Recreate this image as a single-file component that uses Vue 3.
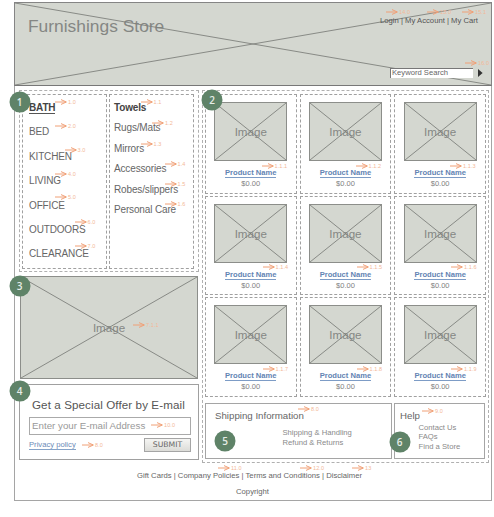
<script setup>
import { h } from 'vue'

const Cross = () =>
  h('svg', { class: 'cross', viewBox: '0 0 100 100', preserveAspectRatio: 'none' }, [
    h('path', { d: 'M0 0L100 100M0 100L100 0', 'vector-effect': 'non-scaling-stroke', fill: 'none', stroke: '#7f817d', 'stroke-width': 0.9 }),
  ])

const categories = ['BATH', 'BED', 'KITCHEN', 'LIVING', 'OFFICE', 'OUTDOORS', 'CLEARANCE']
const subcategories = ['Towels', 'Rugs/Mats', 'Mirrors', 'Accessories', 'Robes/slippers', 'Personal Care']

const badges = [
  { n: 1, x: 19.6, y: 101.8 },
  { n: 2, x: 212.2, y: 100 },
  { n: 3, x: 19.6, y: 285.8 },
  { n: 4, x: 19.6, y: 390.6 },
  { n: 5, x: 225.2, y: 440.6 },
  { n: 6, x: 399.6, y: 441.5 },
]

const notes = [
  ['14.0', 386, 12.3], ['15.0', 427, 12.3], ['15.1', 462, 12.3], ['16.0', 465, 63],
  ['1.0', 55, 101.7], ['2.0', 55, 125.6], ['3.0', 64.5, 149.7], ['4.0', 55, 173.6],
  ['5.0', 55, 197.4], ['6.0', 74.5, 221.6], ['7.0', 74.5, 246],
  ['1.1', 140.5, 101.5], ['1.2', 152, 123], ['1.3', 140.5, 143.5], ['1.4', 164.5, 163.5],
  ['1.5', 164.5, 183.7], ['1.6', 164.5, 203.7],
  ['7.1.1', 133, 325], ['10.0', 151, 425], ['8.0', 82, 445],
  ['1.1.1', 261.5, 166], ['1.1.2', 355.5, 166], ['1.1.3', 450, 166],
  ['1.1.4', 262.5, 266.7], ['1.1.5', 356.5, 266.7], ['1.1.6', 451, 266.7],
  ['1.1.7', 262.5, 369.3], ['1.1.8', 356.5, 369.3], ['1.1.9', 451, 369.3],
  ['8.0', 298, 409.2], ['9.0', 422, 410.5],
  ['11.0', 218, 467.6], ['12.0', 300, 467.8], ['13', 352, 467.8],
]
</script>

<template>
  <div class="page">
    <div class="frame">
      <header class="header">
        <h1>Furnishings Store</h1>
        <Cross />
        <div class="tools">
          <div class="account">Login | My Account | My Cart</div>
          <div class="search">
            <div class="search-box">Keyword Search</div>
            <svg class="go" viewBox="0 0 5 8"><path d="M0 0L4.6 4L0 8Z" fill="#333" /></svg>
          </div>
        </div>
      </header>

      <main class="main">
        <div class="left">
          <nav class="nav">
            <ul class="cats">
              <li v-for="(c, i) in categories" :key="c"><span :class="{ current: i === 0 }">{{ c }}</span></li>
            </ul>
            <ul class="subs">
              <li v-for="(s, i) in subcategories" :key="s" :class="{ bold: i === 0 }">{{ s }}</li>
            </ul>
          </nav>
          <div class="picture promo"><span>Image</span><Cross /></div>
          <section class="offer">
            <h2>Get a Special Offer by E-mail</h2>
            <div class="email">Enter your E-mail Address</div>
            <div class="offer-row">
              <a class="privacy">Privacy policy</a>
              <div class="submit">SUBMIT</div>
            </div>
          </section>
        </div>

        <div class="right">
          <div class="products">
            <article v-for="p in 9" :key="p" class="card">
              <div class="picture"><span>Image</span><Cross /></div>
              <a class="name">Product Name</a>
              <div class="price">$0.00</div>
            </article>
          </div>
          <div class="info">
            <section class="shipping">
              <h3>Shipping Information</h3>
              <p>Shipping &amp; Handling</p>
              <p>Refund &amp; Returns</p>
            </section>
            <section class="help">
              <h3>Help</h3>
              <p>Contact Us</p>
              <p>FAQs</p>
              <p>Find a Store</p>
            </section>
          </div>
        </div>
      </main>

      <footer class="footer">
        <div class="links">Gift Cards | Company Policies | Terms and Conditions | Disclaimer</div>
        <div class="copy">Copyright</div>
      </footer>
    </div>

    <div v-for="(n, i) in notes" :key="i" class="note" :style="{ left: n[1] + 'px', top: n[2] + 'px' }">
      <svg viewBox="0 0 12 6"><path d="M0 3H11M6 .6L11.4 3L6 5.4" fill="none" stroke="#f0a077" stroke-width="1" /></svg>
      <span>{{ n[0] }}</span>
    </div>
    <div v-for="b in badges" :key="b.n" class="badge" :style="{ left: b.x + 'px', top: b.y + 'px' }">{{ b.n }}</div>
  </div>
</template>

<style>
body {
  margin: 0;
  background: #fff;
}
</style>

<style scoped>
* {
  box-sizing: border-box;
  margin: 0;
  padding: 0;
}
.page {
  position: relative;
  width: 494px;
  height: 517px;
  padding: 2px 0 0 14px;
  overflow: hidden;
  font-family: "Liberation Sans", Arial, sans-serif;
  color: #666;
  white-space: nowrap;
}
.frame {
  display: flex;
  flex-direction: column;
  width: 478px;
  height: 499px;
  border: 1px solid #a5a5a5;
}
.header {
  position: relative;
  display: flex;
  justify-content: space-between;
  flex: none;
  height: 84px;
  margin: -1px -1px 0;
  padding-left: 13px;
  background: #d4d7d0;
  border: 1px solid #858585;
  border-bottom-color: #777;
}
h1 {
  padding-top: 12px;
  font-size: 17.4px;
  line-height: 22px;
  font-weight: 400;
  color: #858784;
}
.cross {
  position: absolute;
  inset: 0;
  width: 100%;
  height: 100%;
}
.tools {
  position: relative;
  width: 103px;
  margin-right: 8px;
}
.account {
  padding: 13px 0 0 0;
  font-size: 7.7px;
  line-height: 10px;
  color: #555;
}
.search {
  display: flex;
  align-items: center;
  margin: 42px 0 0 10px;
}
.search-box {
  flex: none;
  width: 83px;
  height: 10px;
  padding-left: 1px;
  background: #fff;
  border-top: 1px solid #777;
  border-left: 1px solid #777;
  font-size: 7.65px;
  line-height: 8px;
  color: #666;
}
.go {
  flex: none;
  width: 5px;
  height: 8px;
  margin-left: 5px;
}
.main {
  display: flex;
  gap: 3px;
  padding: 4px 0 0 4px;
}
.left {
  width: 180px;
}
.nav {
  display: flex;
  gap: 2px;
  height: 182px;
  padding: 3px 2px;
  border: 1px dashed #b0b0b0;
}
ul {
  width: 85px;
  height: 175px;
  padding-left: 6px;
  border: 1px dashed #a0a0a0;
  list-style: none;
  font-size: 10px;
  letter-spacing: -0.15px;
}
.subs {
  padding: 3px 0 0 4px;
}
.cats li {
  height: 24.4px;
  line-height: 26px;
}
.subs li {
  height: 20.45px;
  line-height: 20.45px;
}
.current {
  font-weight: 700;
  color: #444;
  border-bottom: 1px solid #555;
}
.bold {
  font-weight: 700;
  color: #444;
}
.picture {
  position: relative;
  display: flex;
  align-items: center;
  justify-content: center;
  width: 73px;
  height: 59px;
  background: #d4d7d0;
  border: 1px solid #8c8e8a;
  font-size: 11.6px;
  color: #858784;
}
.promo {
  width: 178px;
  height: 103px;
  margin: 4px 0 0 1px;
}
.offer {
  width: 180px;
  height: 76px;
  margin-top: 5px;
  padding: 11px 7px 0 9px;
  border: 1px solid #a0a0a0;
}
h2 {
  padding-left: 3px;
  font-size: 11.6px;
  line-height: 18px;
  font-weight: 400;
  letter-spacing: 0.1px;
  color: #555;
}
.email {
  height: 18px;
  margin-top: 3px;
  padding-left: 2px;
  border: 1px solid #aaa;
  font-size: 9.75px;
  line-height: 16px;
  color: #999;
}
.offer-row {
  display: flex;
  justify-content: space-between;
  align-items: flex-start;
  padding-top: 3px;
}
.privacy {
  height: 12px;
  border-bottom: 1px solid #86a3c8;
  font-size: 7.65px;
  line-height: 13px;
  color: #6c8bb8;
}
.submit {
  width: 47px;
  height: 14px;
  border: 1px solid #a5a5a5;
  background: linear-gradient(#f5f5f3, #dcdcd8);
  font-family: "DejaVu Sans", sans-serif;
  font-size: 7.7px;
  line-height: 12px;
  text-align: center;
  color: #666;
}
.right {
  width: 287px;
  height: 373px;
  padding: 3px 2px 0;
  border: 1px dashed #b0b0b0;
}
.products {
  display: grid;
  grid-template-columns: repeat(3, 91.5px);
  grid-template-rows: 100px 99px 100px;
  gap: 2px 3.2px;
}
.card {
  display: flex;
  flex-direction: column;
  align-items: center;
  padding-top: 6.5px;
  border: 1px dashed #a0a0a0;
}
.name {
  height: 13px;
  margin-top: 4.5px;
  border-bottom: 1px solid #7d9cc6;
  font-size: 7.6px;
  line-height: 16px;
  font-weight: 700;
  color: #6384b3;
}
.price {
  margin-top: 1px;
  font-size: 7.5px;
  line-height: 10px;
  color: #808080;
}
.info {
  display: flex;
  gap: 2px;
  margin-top: 6px;
}
.shipping,
.help {
  height: 56px;
  border: 1px solid #a5a5a5;
  font-size: 7.67px;
  line-height: 9.8px;
  color: #8a8a8a;
}
.shipping {
  width: 187px;
  padding: 6px 0 0 9px;
}
.shipping p {
  padding-left: 67.5px;
}
.shipping h3 {
  margin-bottom: 6px;
}
.help {
  width: 91px;
  padding: 6px 0 0 5px;
}
.help h3 {
  margin-bottom: 0.6px;
}
.help p {
  padding-left: 18.5px;
}
h3 {
  font-size: 9.7px;
  line-height: 12px;
  font-weight: 400;
  color: #666;
}
.footer {
  display: flex;
  flex-direction: column;
  align-items: center;
  padding: 8px 7px 0 0;
  font-size: 7.7px;
  line-height: 10px;
}
.copy {
  margin: 6px 0 0 6px;
}
.note {
  position: absolute;
  display: flex;
  align-items: center;
  gap: 1px;
  height: 6px;
  transform: translateY(-50%);
  font-size: 5.5px;
  line-height: 6px;
  color: #f3b898;
}
.note svg {
  width: 12px;
  height: 6px;
}
.note span {
  letter-spacing: 0.1px;
}
.badge {
  position: absolute;
  width: 21px;
  height: 21px;
  border-radius: 50%;
  background: #5f8368;
  transform: translate(-50%, -50%);
  font-family: "Open Sans", sans-serif;
  font-size: 10px;
  line-height: 20px;
  font-weight: 600;
  text-align: center;
  color: #e6ede7;
}
</style>
